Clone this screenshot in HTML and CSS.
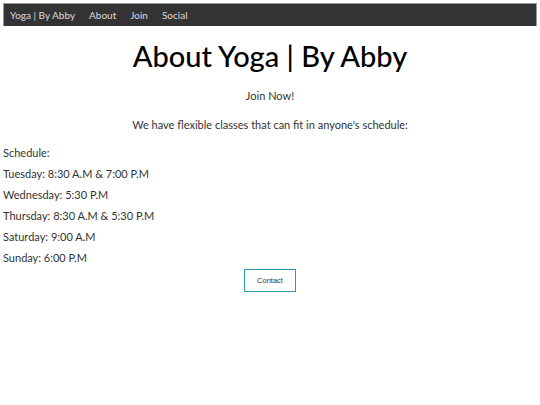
FILE: index.html
```
<!DOCTYPE html>
<html>
<head>
<meta charset="utf-8">
<link rel="stylesheet" href="styles.css">
</head>
<body>
<nav class="navbar">
  <a class="nav-link">Yoga | By Abby</a>
  <a class="nav-link">About</a>
  <a class="nav-link">Join</a>
  <a class="nav-link">Social</a>
</nav>
<main class="content">
  <h1 class="title">About Yoga | By Abby</h1>
  <p class="center join">Join Now!</p>
  <p class="center intro">We have flexible classes that can fit in anyone's schedule:</p>
  <ul class="schedule">
    <li>Schedule:</li>
    <li>Tuesday: 8:30 A.M &amp; 7:00 P.M</li>
    <li>Wednesday: 5:30 P.M</li>
    <li>Thursday: 8:30 A.M &amp; 5:30 P.M</li>
    <li>Saturday: 9:00 A.M</li>
    <li>Sunday: 6:00 P.M</li>
  </ul>
  <div class="btn-row"><button class="contact">Contact</button></div>
</main>
</body>
</html>
```
FILE: styles.css
```
html, body { background: #fff; }
body {
  margin: 3px;
  font-family: "Lato", "DejaVu Sans", sans-serif;
  color: #333;
}
.navbar {
  display: flex;
  align-items: center;
  gap: 14px;
  height: 22px;
  background: #333;
  border: 1px solid #999;
  border-bottom: none;
  padding-left: 6px;
}
.nav-link {
  color: #ddd;
  font-size: 10px;
}
.content { display: flex; flex-direction: column; }
.title {
  margin: 13px 0 0;
  text-align: center;
  font-size: 29px;
  font-weight: 500;
  line-height: 34px;
  color: #000;
}
.center { text-align: center; }
p, li { font-size: 11px; line-height: 13px; margin: 0; }
.join { margin-top: 16px; }
.intro { margin-top: 16px; }
.schedule {
  list-style: none;
  margin: 15px 0 0;
  padding: 0;
  display: flex;
  flex-direction: column;
  gap: 8px;
}
.btn-row { display: flex; justify-content: center; margin-top: 5px; }
.contact {
  width: 52px;
  height: 23px;
  background: #fff;
  border: 1px solid #2a9ab0;
  font-family: "Liberation Sans", Arial, sans-serif;
  font-size: 7.5px;
  color: #333;
  padding: 0;
}
```
